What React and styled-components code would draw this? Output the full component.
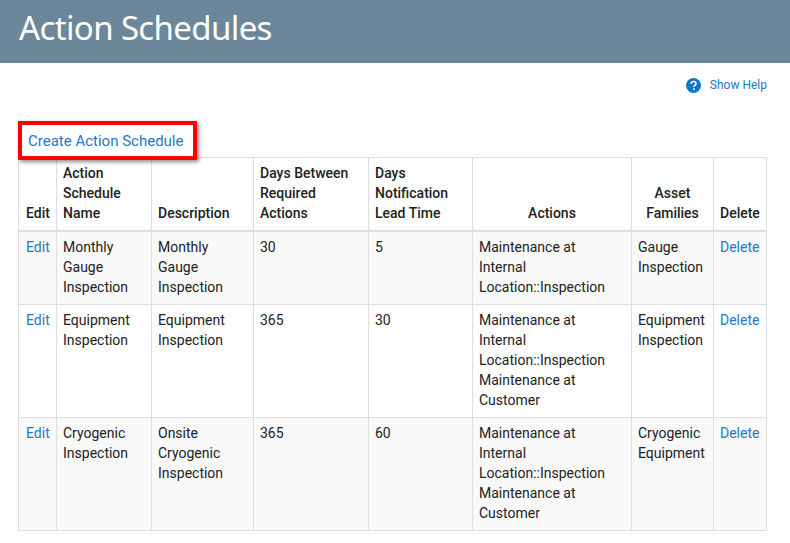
import React from "react";
import styled, { createGlobalStyle } from "styled-components";

const Global = createGlobalStyle`
  html, body { margin: 0; padding: 0; background: #fff; }
  body { font-family: Roboto, "Liberation Sans", sans-serif; font-size: 14px; line-height: 20px; color: #222; }
`;
const Page = styled.div`width: 790px; height: 543px; overflow: hidden;`;
const Header = styled.header`
  height: 63px; background: #6b8799; padding: 0 19px; box-sizing: border-box;
`;
const Title = styled.h1`
  margin: 0; font-family: "Noto Sans", sans-serif; font-weight: 400; font-size: 33px; line-height: 55px; color: #fff; letter-spacing: -0.63px;
`;
const Content = styled.main`padding: 0 23px 0 18px;`;
const HelpRow = styled.div`
  display: flex; justify-content: flex-end; align-items: center; gap: 9px; padding-top: 14px; height: 16px; font-size: 12px;
`;
const HelpLink = styled.a`color: #1f78c8; text-decoration: none;`;
const CreateWrap = styled.div`position: relative; margin-top: 33px; height: 31px; padding-left: 10px; line-height: 31px; font-size: 15px;`;
const CreateLink = styled.a`color: #2577c9; text-decoration: none;`;
const Annotation = styled.div`
  position: absolute; left: 0; top: -5px; width: 179px; height: 39px; box-sizing: border-box;
  border: 4px solid #f00; box-shadow: 2px 2px 4px rgba(0,0,0,.45); pointer-events: none;
`;
const Table = styled.table`
  width: 748px; table-layout: fixed; border-collapse: collapse; border: 1px solid #ddd;
`;
const Head = styled.th`
  border: 1px solid #ddd; border-bottom-width: 2px; padding: 5px 6px 7px; vertical-align: bottom; font-weight: 500; color: #222;
  text-align: ${p => p.$center ? "center" : "left"};
  &:first-child { padding-left: 7px; padding-right: 5px; }
`;
const Row = styled.tr`background: ${p => p.$striped ? "#f9f9f9" : "#fff"};`;
const Cell = styled.td`
  border: 1px solid #ddd; padding: 5px 6px 7px; vertical-align: top;
  &:first-child { padding-left: 7px; padding-right: 5px; }
`;
const CellLink = styled.a`color: #2577c9; text-decoration: none;`;

const widths = [38, 95, 102, 115, 104, 159, 82, 53];
const heads = [
  ["Edit"], ["Action Schedule Name"], ["Description"], ["Days Between Required Actions"],
  ["Days Notification Lead Time"], ["Actions", true], ["Asset Families", true], ["Delete"],
];
const rows = [
  ["Monthly Gauge Inspection", "Monthly Gauge Inspection", "30", "5", ["Maintenance at Internal Location::Inspection"], "Gauge Inspection"],
  ["Equipment Inspection", "Equipment Inspection", "365", "30", ["Maintenance at Internal Location::Inspection", "Maintenance at Customer"], "Equipment Inspection"],
  ["Cryogenic Inspection", "Onsite Cryogenic Inspection", "365", "60", ["Maintenance at Internal Location::Inspection", "Maintenance at Customer"], "Cryogenic Equipment"],
];

const HelpIcon = () => (
  <svg width="15" height="15" viewBox="0 0 16 16" aria-hidden="true">
    <circle cx="8" cy="8" r="8" fill="#0f75c9" />
    <path d="M5.4 6.2C5.5 4.6 6.6 3.7 8.1 3.7c1.6 0 2.6 1 2.6 2.2 0 1-.6 1.5-1.3 2-.6.4-.8.7-.8 1.4v.3" fill="none" stroke="#fff" strokeWidth="1.7" />
    <rect x="7.6" y="11" width="1.8" height="1.8" fill="#fff" />
  </svg>
);

export default function App() {
  return (
    <Page>
      <Global />
      <Header><Title>Action Schedules</Title></Header>
      <Content>
        <HelpRow>
          <HelpIcon />
          <HelpLink href="#">Show Help</HelpLink>
        </HelpRow>
        <CreateWrap>
          <CreateLink href="#">Create Action Schedule</CreateLink>
          <Annotation />
        </CreateWrap>
        <Table>
          <colgroup>{widths.map((w, i) => <col key={i} style={{ width: w }} />)}</colgroup>
          <thead>
            <tr>{heads.map(([t, c]) => <Head key={t} $center={c}>{t}</Head>)}</tr>
          </thead>
          <tbody>
            {rows.map((r, i) => (
              <Row key={i} $striped={i % 2 === 0}>
                <Cell><CellLink href="#">Edit</CellLink></Cell>
                <Cell>{r[0]}</Cell>
                <Cell>{r[1]}</Cell>
                <Cell>{r[2]}</Cell>
                <Cell>{r[3]}</Cell>
                <Cell>{r[4].map(a => <div key={a}>{a}</div>)}</Cell>
                <Cell>{r[5]}</Cell>
                <Cell><CellLink href="#">Delete</CellLink></Cell>
              </Row>
            ))}
          </tbody>
        </Table>
      </Content>
    </Page>
  );
}
